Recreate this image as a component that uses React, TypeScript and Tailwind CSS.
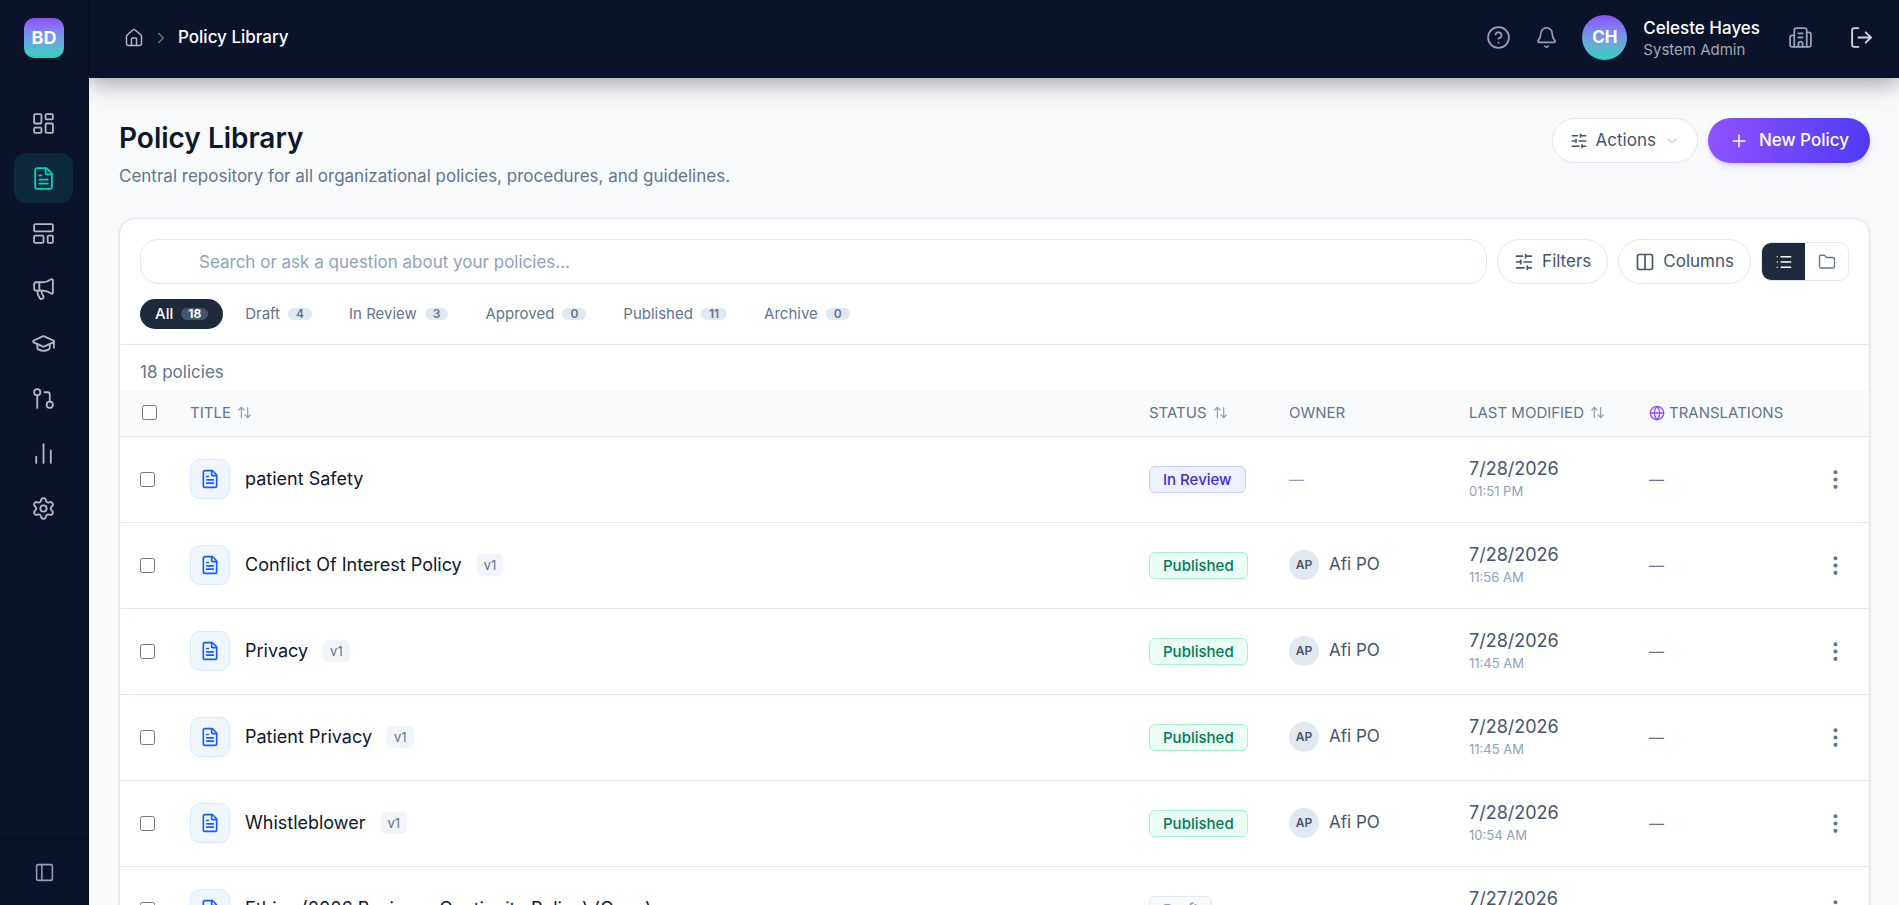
import React from 'react';
import {
  LayoutDashboard, FileText, LayoutTemplate, Megaphone, GraduationCap, GitPullRequest,
  ChartNoAxesColumn, Settings, PanelLeft, House, ChevronRight, ChevronDown, CircleQuestionMark,
  Bell, Building2, LogOut, SlidersHorizontal, Plus, Columns2, List, Folder, ArrowUpDown, Globe,
  EllipsisVertical
} from 'lucide-react';

const navItems = [
  { label: 'Dashboard', icon: LayoutDashboard },
  { label: 'Policies', icon: FileText, active: true },
  { label: 'Templates', icon: LayoutTemplate },
  { label: 'Campaigns', icon: Megaphone },
  { label: 'Training', icon: GraduationCap },
  { label: 'Workflows', icon: GitPullRequest },
  { label: 'Reports', icon: ChartNoAxesColumn },
  { label: 'Settings', icon: Settings }
];

const tabs = [
  { label: 'All', count: 18, active: true },
  { label: 'Draft', count: 4 },
  { label: 'In Review', count: 3 },
  { label: 'Approved', count: 0 },
  { label: 'Published', count: 11 },
  { label: 'Archive', count: 0 }
];

const policies = [
  { title: 'patient Safety', version: '', status: 'In Review', owner: '', date: '7/28/2026', time: '01:51 PM' },
  { title: 'Conflict Of Interest Policy', version: 'v1', status: 'Published', owner: 'Afi PO', date: '7/28/2026', time: '11:56 AM' },
  { title: 'Privacy', version: 'v1', status: 'Published', owner: 'Afi PO', date: '7/28/2026', time: '11:45 AM' },
  { title: 'Patient Privacy', version: 'v1', status: 'Published', owner: 'Afi PO', date: '7/28/2026', time: '11:45 AM' },
  { title: 'Whistleblower', version: 'v1', status: 'Published', owner: 'Afi PO', date: '7/28/2026', time: '10:54 AM' },
  { title: 'Ethics (2026 Business Continuity Policy) (Copy)', version: '', status: 'Draft', owner: '', date: '7/27/2026', time: '04:12 PM' }
];

const statusStyles: Record<string, string> = {
  'In Review': 'bg-indigo-50 border-indigo-200 text-indigo-700',
  Published: 'bg-emerald-50 border-emerald-200 text-emerald-700',
  Draft: 'bg-slate-50 border-slate-200 text-slate-400'
};

function Sidebar() {
  return (
    <aside className="relative z-20 w-[89px] shrink-0 bg-[#0b132b] border-r border-[#080e20] flex flex-col">
      <div className="h-[78px] shrink-0 border-b border-[#080e20] pb-0.5 flex items-center justify-center">
        <div className="w-10 h-10 rounded-[10px] bg-gradient-to-b from-[#8b4dff] to-[#1fd3bd] flex items-center justify-center text-white text-lg font-bold">
          BD
        </div>
      </div>
      <nav className="flex-1 pl-3.5 pr-[15px] pt-5 flex flex-col gap-[5px]">
        {navItems.map((item) => (
          <a
            key={item.label}
            href="#"
            aria-label={item.label}
            className={
              item.active
                ? 'h-[50px] shrink-0 rounded-xl bg-[#0b283d] text-[#00d5be] flex items-center justify-center'
                : 'h-[50px] shrink-0 rounded-xl text-[#b5b8c0] flex items-center justify-center'
            }
          >
            <item.icon size={25} strokeWidth={1.75} />
          </a>
        ))}
      </nav>
      <div className="h-[66px] shrink-0 border-t border-[#080e20] flex items-center justify-center">
        <button aria-label="Expand sidebar" className="p-2 text-slate-400">
          <PanelLeft size={21} strokeWidth={1.75} />
        </button>
      </div>
    </aside>
  );
}

function Header() {
  return (
    <header className="relative z-10 h-[78px] shrink-0 bg-[#0b132b] shadow-[0_4px_24px_rgba(0,0,0,0.4)] flex items-center justify-between pl-[35px] pr-[25px] pb-[3px]">
      <nav className="flex items-center gap-2" aria-label="Breadcrumb">
        <a href="#" aria-label="Home" className="text-[#b5b8c0]">
          <House size={20} strokeWidth={1.75} />
        </a>
        <ChevronRight size={18} strokeWidth={1.75} className="text-[#6f7584]" />
        <span className="text-white text-[17px] font-medium">Policy Library</span>
      </nav>
      <div className="flex items-center">
        <button aria-label="Help" className="text-slate-400 mr-6">
          <CircleQuestionMark size={25} strokeWidth={1.75} />
        </button>
        <button aria-label="Notifications" className="text-slate-400 mr-6">
          <Bell size={23} strokeWidth={1.75} />
        </button>
        <div className="w-[45px] h-[45px] rounded-full bg-gradient-to-b from-[#8b4dff] to-[#1fd3bd] flex items-center justify-center text-white text-[17px] font-bold">
          CH
        </div>
        <div className="ml-4 mr-7 flex flex-col">
          <span className="text-[17px] leading-6 font-medium text-white">Celeste Hayes</span>
          <span className="text-[15px] leading-5 text-[#a3a6af]">System Admin</span>
        </div>
        <button aria-label="Organization" className="text-slate-400 mr-9">
          <Building2 size={25} strokeWidth={1.75} />
        </button>
        <button aria-label="Log out" className="text-[#d5d7dc]">
          <LogOut size={25} strokeWidth={1.75} />
        </button>
      </div>
    </header>
  );
}

function Toolbar() {
  return (
    <div className="p-5 pb-[15px] border-b border-slate-200">
      <div className="flex items-center gap-2.5">
        <input
          type="text"
          aria-label="Search policies"
          placeholder="Search or ask a question about your policies…"
          className="flex-1 min-w-0 h-[45px] rounded-[18px] border border-slate-200 pl-[58px] pr-4 text-[17px] text-slate-900 placeholder:text-slate-400"
        />
        <button className="h-[45px] px-4 rounded-full border border-slate-200 flex items-center gap-2 text-[17px] text-slate-600">
          <SlidersHorizontal size={20} strokeWidth={2} />
          Filters
        </button>
        <button className="h-[45px] px-4 rounded-full border border-slate-200 flex items-center gap-2 text-[17px] text-slate-600">
          <Columns2 size={20} strokeWidth={2} />
          Columns
        </button>
        <div className="h-[39px] rounded-[10px] border border-slate-200 overflow-hidden flex">
          <button aria-label="List view" className="w-[43px] bg-slate-800 text-white flex items-center justify-center">
            <List size={18} strokeWidth={1.75} />
          </button>
          <button aria-label="Folder view" className="w-[43px] text-slate-500 flex items-center justify-center">
            <Folder size={18} strokeWidth={1.75} />
          </button>
        </div>
      </div>
      <div className="mt-[15px] flex items-center gap-[7px]">
        {tabs.map((tab) => (
          <button
            key={tab.label}
            className={
              tab.active
                ? 'h-[30px] px-[15px] rounded-full bg-slate-800 text-white text-[15px] font-medium flex items-center gap-2'
                : 'h-[30px] px-[15px] rounded-full text-slate-500 text-[15px] flex items-center gap-2'
            }
          >
            {tab.label}
            <span
              className={
                tab.active
                  ? 'h-3 px-[7px] rounded-full bg-slate-600 text-[12px] leading-3 font-bold'
                  : 'h-3 px-2 rounded-full bg-slate-200 text-[12px] leading-3 font-semibold'
              }
            >
              {tab.count}
            </span>
          </button>
        ))}
      </div>
    </div>
  );
}

function SortHeader({ label }: { label: string }) {
  return (
    <button className="flex items-center gap-1.5 uppercase">
      {label}
      <ArrowUpDown size={15} strokeWidth={2} className="text-slate-400" />
    </button>
  );
}

function PolicyTable() {
  return (
    <table className="w-full table-fixed text-left">
      <colgroup>
        <col className="w-[50px]" />
        <col />
        <col className="w-[140px]" />
        <col className="w-[180px]" />
        <col className="w-[180px]" />
        <col className="w-[180px]" />
        <col className="w-[60px]" />
      </colgroup>
      <thead className="bg-slate-50 text-[15px] text-slate-500">
        <tr className="h-[46px] border-b border-slate-200 [&>th]:font-normal [&>th]:px-5">
          <th>
            <input type="checkbox" aria-label="Select all policies" className="block ml-0.5 w-[15px] h-[15px]" />
          </th>
          <th><SortHeader label="Title" /></th>
          <th><SortHeader label="Status" /></th>
          <th className="uppercase">Owner</th>
          <th><SortHeader label="Last Modified" /></th>
          <th>
            <span className="flex items-center gap-1 uppercase">
              <Globe size={16} strokeWidth={2} className="shrink-0 text-[#8e51ff]" />
              Translations
            </span>
          </th>
          <th aria-label="Row actions"></th>
        </tr>
      </thead>
      <tbody>
        {policies.map((policy) => (
          <tr key={policy.title} className="h-[86px] border-b border-slate-200 [&>td]:px-5 [&>td:last-child]:px-3.5">
            <td>
              <input type="checkbox" aria-label={`Select ${policy.title}`} className="block w-[15px] h-[15px]" />
            </td>
            <td>
              <div className="flex items-center">
                <div className="w-10 h-10 shrink-0 rounded-[10px] bg-blue-50 border border-blue-100 flex items-center justify-center text-blue-600">
                  <FileText size={20} strokeWidth={2} />
                </div>
                <span className="ml-[15px] text-lg text-slate-900">{policy.title}</span>
                {policy.version && (
                  <span className="ml-[15px] h-[22px] px-[7px] rounded-[5px] bg-slate-100 text-[13px] leading-[22px] text-slate-500">
                    {policy.version}
                  </span>
                )}
              </div>
            </td>
            <td>
              <span className={`inline-block px-[13px] rounded-md border text-[15px] leading-[25px] font-medium whitespace-nowrap ${statusStyles[policy.status]}`}>
                {policy.status}
              </span>
            </td>
            <td>
              {policy.owner ? (
                <div className="flex items-center gap-2.5">
                  <span className="w-[30px] h-[30px] rounded-full bg-slate-200 flex items-center justify-center text-[12px] font-semibold text-slate-600">AP</span>
                  <span className="text-[17px] text-slate-600">{policy.owner}</span>
                </div>
              ) : (
                <span className="text-[15px] text-slate-400">—</span>
              )}
            </td>
            <td>
              <div className="text-lg leading-6 text-slate-600">{policy.date}</div>
              <div className="text-[13px] leading-5 text-slate-400">{policy.time}</div>
            </td>
            <td>
              <span className="text-[15px] text-slate-500">—</span>
            </td>
            <td>
              <button aria-label={`Actions for ${policy.title}`} className="block text-slate-500">
                <EllipsisVertical size={25} strokeWidth={2} />
              </button>
            </td>
          </tr>
        ))}
      </tbody>
    </table>
  );
}

export default function App() {
  return (
    <div className="h-screen flex overflow-hidden bg-[#f8fafc] font-['Inter',sans-serif]">
      <Sidebar />
      <div className="flex-1 min-w-0 flex flex-col">
        <Header />
        <main className="flex-1 min-h-0 overflow-y-auto [scrollbar-width:none] pl-[30px] pr-[29px] pt-10">
          {/* Page title and actions */}
          <div className="flex items-start justify-between">
            <div>
              <h1 className="text-[28px] leading-10 font-semibold text-slate-900">Policy Library</h1>
              <p className="mt-1 text-[17px] leading-7 text-slate-500">
                Central repository for all organizational policies, procedures, and guidelines.
              </p>
            </div>
            <div className="flex items-center gap-2.5">
              <button className="h-[45px] px-[17px] rounded-full border border-slate-200 bg-white flex items-center gap-2 text-[17px] text-slate-600">
                <SlidersHorizontal size={18} strokeWidth={2} />
                Actions
                <ChevronDown size={16} strokeWidth={1.75} className="text-slate-300" />
              </button>
              <button className="h-[45px] px-[21px] rounded-full bg-gradient-to-r from-[#8e51ff] to-[#4f39f6] shadow-md shadow-violet-200 flex items-center gap-2.5 text-[17px] font-medium text-white">
                <Plus size={20} strokeWidth={1.75} />
                New Policy
              </button>
            </div>
          </div>

          {/* Library card */}
          <section className="mt-7 bg-white rounded-2xl border border-slate-200 shadow-sm overflow-hidden">
            <Toolbar />
            <p className="px-5 pt-3.5 pb-[5px] text-[17px] leading-[26px] text-slate-500">18 policies</p>
            <PolicyTable />
          </section>
        </main>
      </div>
    </div>
  );
}
